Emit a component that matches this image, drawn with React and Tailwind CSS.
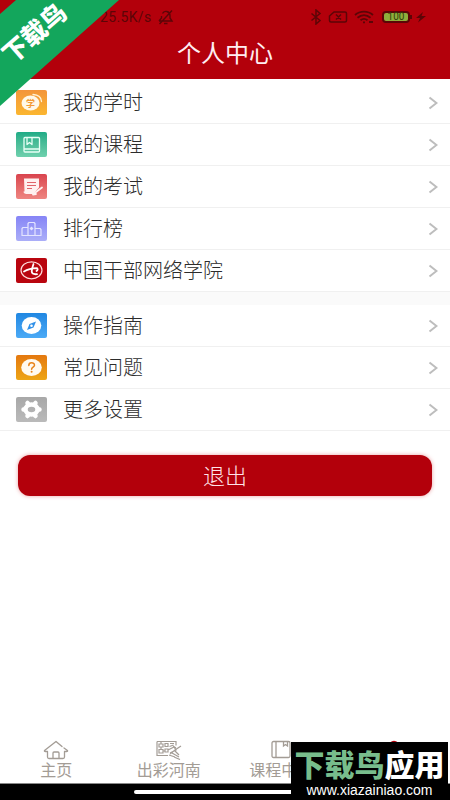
import React from "react";

const iconBox = "block h-[25px] w-[31px] shrink-0 rounded-xs";

function HoursIcon() {
  return (
    <svg viewBox="0 0 31 25" className={`${iconBox} bg-linear-to-b from-[#f3953a] to-[#fbb62f]`} aria-hidden="true">
      <ellipse cx="14.5" cy="13" rx="9" ry="7.5" fill="#fff8e8" />
      <path d="M17 4.5c5 .3 8.300 3 8.500 7" fill="none" stroke="#fff3d8" strokeWidth="1.300" strokeLinecap="round" />
      <text x="14.500" y="16.500" textAnchor="middle" fontSize="9" fontWeight="700" fill="#f39a35">学</text>
    </svg>
  );
}

function CourseIcon() {
  return (
    <svg viewBox="0 0 31 25" className={`${iconBox} bg-linear-to-b from-[#1dac87] to-[#6ed0ad]`} aria-hidden="true">
      <g fill="none" stroke="#e8fff6" strokeWidth="1.300" strokeLinejoin="round">
        <rect x="8" y="5.500" width="15.500" height="14.500" rx="1" />
        <path d="M8 17h15.500M11 5.500v7l2.500-2 2.500 2v-7" />
      </g>
    </svg>
  );
}

function ExamIcon() {
  return (
    <svg viewBox="0 0 31 25" className={`${iconBox} bg-linear-to-b from-[#d9434e] to-[#ee8581]`} aria-hidden="true">
      <path d="M8 4.500h15v9l-6 6.500H10.500c-2 0-3-1-3-2.500h1z" fill="#fff1f0" />
      <path d="M11 8.500h9M11 11.500h9M11 14.500h5" stroke="#e0646a" strokeWidth="1.100" />
      <path d="M18 19.500l8-6M17 20.500l3-.5" stroke="#fff1f0" strokeWidth="1.800" strokeLinecap="round" />
    </svg>
  );
}

function RankIcon() {
  return (
    <svg viewBox="0 0 31 25" className={`${iconBox} bg-linear-to-b from-[#8684f6] to-[#abaef8]`} aria-hidden="true">
      <g fill="none" stroke="#e4e5ff" strokeWidth="1.200" strokeLinejoin="round">
        <path d="M12 19.500V7.500l1-1h5l1 1v12M12 11.500H7l-1 1v7h19v-6l-1-1h-5" />
      </g>
      <path d="M15.500 10.500l2 2-2 2-2-2z" fill="#e4e5ff" />
    </svg>
  );
}

function AcademyIcon() {
  return (
    <svg viewBox="0 0 31 25" className={`${iconBox} bg-[#b9050f]`} aria-hidden="true">
      <ellipse cx="15.500" cy="12.300" rx="10.500" ry="8.500" fill="none" stroke="#ffd9d9" strokeWidth="1.200" />
      <path d="M8 13.500c3-1.800 6-3 13-3.300q1.500 1.300-.5 2.800" fill="none" stroke="#fff" strokeWidth="1.800" strokeLinecap="round" />
      <path d="M17.500 6c-.8 3-2 5.500-1.700 8 .2 2 2.700 2.400 5.200 2.200" fill="none" stroke="#fff" strokeWidth="1.800" strokeLinecap="round" />
    </svg>
  );
}

function GuideIcon() {
  return (
    <svg viewBox="0 0 31 25" className={`${iconBox} bg-linear-to-b from-[#1f87e2] to-[#4baaf6]`} aria-hidden="true">
      <ellipse cx="15.500" cy="12.500" rx="9.800" ry="8.500" fill="#fff" />
      <path d="M20 8.500l-2.500 6-6.500 2.500 2.500-6z" fill="#2f90e8" />
      <circle cx="15.500" cy="12.700" r="1.300" fill="#fff" />
    </svg>
  );
}

function FaqIcon() {
  return (
    <svg viewBox="0 0 31 25" className={`${iconBox} bg-linear-to-b from-[#e4780f] to-[#eda516]`} aria-hidden="true">
      <ellipse cx="15.500" cy="12.500" rx="10.300" ry="8.500" fill="#fffaf0" />
      <path d="M12.800 10.500c0-3.600 5.700-3.400 5.700-.3 0 1.900-2.900 2-2.900 4" fill="none" stroke="#e8841a" strokeWidth="1.500" strokeLinecap="round" />
      <circle cx="15.600" cy="16.700" r="1" fill="#e8841a" />
    </svg>
  );
}

function SettingsIcon() {
  return (
    <svg viewBox="0 0 31 25" className={`${iconBox} bg-linear-to-b from-[#a8a8a8] to-[#bababa]`} aria-hidden="true">
      <ellipse cx="15.500" cy="12.500" rx="6" ry="5" fill="none" stroke="#fff" strokeWidth="4.500" />
      <g stroke="#fff" strokeWidth="4.500" strokeLinecap="round">
        <path d="M12 6.500l-.5-.5M19 6.500l.5-.5M8.500 12.500H7.500M22.500 12.500h1M12 18.500l-.5.500M19 18.500l.5.500" />
      </g>
    </svg>
  );
}

const learning = [
  { label: "我的学时", Icon: HoursIcon },
  { label: "我的课程", Icon: CourseIcon },
  { label: "我的考试", Icon: ExamIcon },
  { label: "排行榜", Icon: RankIcon },
  { label: "中国干部网络学院", Icon: AcademyIcon },
];

const support = [
  { label: "操作指南", Icon: GuideIcon },
  { label: "常见问题", Icon: FaqIcon },
  { label: "更多设置", Icon: SettingsIcon },
];

function MenuList({ items }) {
  return (
    <ul>
      {items.map(({ label, Icon }) => (
        <li key={label} className="border-b border-[#f0f0f0]">
          <a href="#" className="flex h-[41px] items-center pr-3 pl-4">
            <Icon />
            <span className="ml-4 flex-1 pb-0.5 text-xl leading-6 font-light text-[#2c2c2c]">{label}</span>
            <svg viewBox="0 0 10 14" className="h-3.5 w-2.5" fill="none" stroke="#bdbdbd" strokeWidth="2" aria-hidden="true">
              <path d="M1.500 1.500L8.500 7l-7 5.500" />
            </svg>
          </a>
        </li>
      ))}
    </ul>
  );
}

function StatusBar() {
  return (
    <div className="flex h-[34px] items-center justify-between pr-6 pl-[100px] text-[#5c0507]">
      <div className="flex items-center gap-1.5">
        <span className="font-[Roboto] text-sm leading-4 tracking-wide">25.5K/s</span>
        <svg viewBox="0 0 16 16" className="size-4" fill="none" stroke="currentColor" strokeWidth="1.400" aria-hidden="true">
          <path d="M1 12h13l-2-3V6.500C12 2 6 1 4.500 4.500M3.500 7v2L1 12M6 14.500h3.500M1.500 15L14 1.500" />
        </svg>
      </div>
      <div className="flex items-center">
        <svg viewBox="0 0 12 16" className="h-4 w-3" fill="none" stroke="currentColor" strokeWidth="1.500" aria-hidden="true">
          <path d="M1.500 4.500l8.500 7-4 3.500V1l4 3.500-8.500 7" />
        </svg>
        <svg viewBox="0 0 20 14" className="ml-1.5 h-3.5 w-5" fill="none" stroke="currentColor" strokeWidth="1.500" aria-hidden="true">
          <path d="M6 2h11q1.500 0 1.500 1.500v7q0 1.500-1.500 1.500H3q-1.500 0-1.500-1.500V6zM8 4.500l5 5M13 4.500l-5 5" />
        </svg>
        <svg viewBox="0 0 20 14" className="ml-1.5 h-3.5 w-5" fill="none" stroke="currentColor" strokeWidth="1.800" aria-hidden="true">
          <path d="M1 5c5-4.500 13-4.500 18 0M3.500 7.800c4-3.500 9-3.500 13 0M6.500 10.300c2.500-2 4.500-2 7 0" />
          <path d="M9 12.300h2M15 12h4" />
        </svg>
        <div className="ml-2 flex h-3 w-7 items-center justify-center rounded-sm border-2 border-[#5c0507] bg-[#8fae3c] font-[Roboto] text-[10px] leading-none text-[#31400a]">
          100
        </div>
        <div className="h-1 w-0.5 bg-[#5c0507]" />
        <svg viewBox="0 0 10 12" className="ml-1 h-3 w-2.5" fill="currentColor" aria-hidden="true">
          <path d="M7 1L0 7h4l-2 4.500L10 5H5.500z" />
        </svg>
      </div>
    </div>
  );
}

function HomeIcon() {
  return (
    <svg viewBox="0 0 26 20" className="h-5 w-[26px]" fill="none" stroke="currentColor" strokeWidth="1.300" strokeLinejoin="round" strokeLinecap="round" aria-hidden="true">
      <path d="M19 6.500L13 1.500 1.500 10.500q-.5 1 1 1H4.500V17q0 1.500 1.500 1.500H20q1.500 0 1.500-1.500v-5.500h2q1.500 0 1-1L21 8M10 18.500V13q0-1 1-1h4q1 0 1 1v5.500" />
    </svg>
  );
}

function HenanIcon() {
  return (
    <svg viewBox="0 0 26 20" className="h-5 w-[26px]" fill="none" stroke="currentColor" strokeWidth="1.200" aria-hidden="true">
      <path d="M1 1.500h19v4M1 1.500v14h11M3 4h4v3H3zM3 9.500h4v3.500H3zM9 3.500h3v3H9zM9 9h3v3H9zM14 3.500h4M13.500 6.500l4-1.500M5 1.500V4M5 7v2.500M7 11h2M12 10l6-3 2 3-6 3M14 14l5-4 6-4M13 15l6 2M16 13l7 4M19 11l4 4M20 8l-3-2M18 17l6 2.500" />
    </svg>
  );
}

function BookIcon() {
  return (
    <svg viewBox="0 0 26 20" className="h-5 w-[26px]" fill="none" stroke="currentColor" strokeWidth="1.300" aria-hidden="true">
      <rect x="4" y="1.500" width="18" height="16" rx="1.500" />
      <path d="M8 1.500v16M15.500 2v4l2-1.500 2 1.500V2" />
    </svg>
  );
}

function ProfileIcon() {
  return (
    <svg viewBox="0 0 26 20" className="h-5 w-[26px] text-[#b3000b]" fill="none" stroke="currentColor" strokeWidth="1.500" aria-hidden="true">
      <circle cx="13" cy="6" r="4.500" />
      <path d="M4 18.500c1-9 17-9 18 0z" />
    </svg>
  );
}

const tabs = [
  { label: "主页", Icon: HomeIcon },
  { label: "出彩河南", Icon: HenanIcon },
  { label: "课程中心", Icon: BookIcon },
  { label: "我的", Icon: ProfileIcon },
];

function RibbonBadge() {
  return (
    <svg viewBox="0 0 120 107" className="absolute top-0 left-0 h-[107px] w-[120px]" role="img" aria-label="下载鸟">
      <path d="M16 0H119L0 106V14z" fill="#13a65c" />
      <text x="0" y="0" transform="translate(35 34) rotate(-41)" textAnchor="middle" fontSize="25" fontWeight="900" fill="#fff" dy="8">
        下载鸟
      </text>
    </svg>
  );
}

function Watermark() {
  return (
    <div className="absolute right-0.5 bottom-0 flex h-[58px] w-[157px] flex-col items-center bg-black pt-1.5 whitespace-nowrap text-white">
      <p className="text-3xl leading-[30px] font-black">
        <span className="text-[#78bd8c]">下载鸟</span>应用
      </p>
      <p className="font-['Liberation_Sans',sans-serif] text-sm leading-6">www.xiazainiao.com</p>
    </div>
  );
}

export default function App() {
  return (
    <div className="relative flex min-h-screen flex-col overflow-hidden bg-white font-['Noto_Sans_CJK_SC',sans-serif]">
      <header className="h-[79px] bg-[#b3000b]">
        <StatusBar />
        <h1 className="text-center text-2xl leading-9 font-normal text-[#ffeef2]">个人中心</h1>
      </header>
      <main className="flex-1 pt-[3px]">
        <MenuList items={learning} />
        <div className="h-[13px] bg-[#fafafa]" />
        <MenuList items={support} />
        <div className="px-[18px] pt-6">
          <button type="button" className="h-[41px] w-full rounded-xl bg-[#b3000b] pb-1 text-[22px] leading-9 font-light text-[#ffe4e8] shadow-[0_0_4px_#e9a0a4]">
            退出
          </button>
        </div>
      </main>
      <nav className="grid grid-cols-4 pb-1 text-[#a39c95]">
        {tabs.map(({ label, Icon }) => (
          <a key={label} href="#" className="flex flex-col items-center">
            <Icon />
            <span className="text-base leading-[19px]">{label}</span>
          </a>
        ))}
      </nav>
      <div className="flex h-[17px] items-center justify-center border-t border-[#888888] bg-black">
        <div className="h-1 w-[182px] rounded-full bg-white" />
      </div>
      <RibbonBadge />
      <Watermark />
    </div>
  );
}
